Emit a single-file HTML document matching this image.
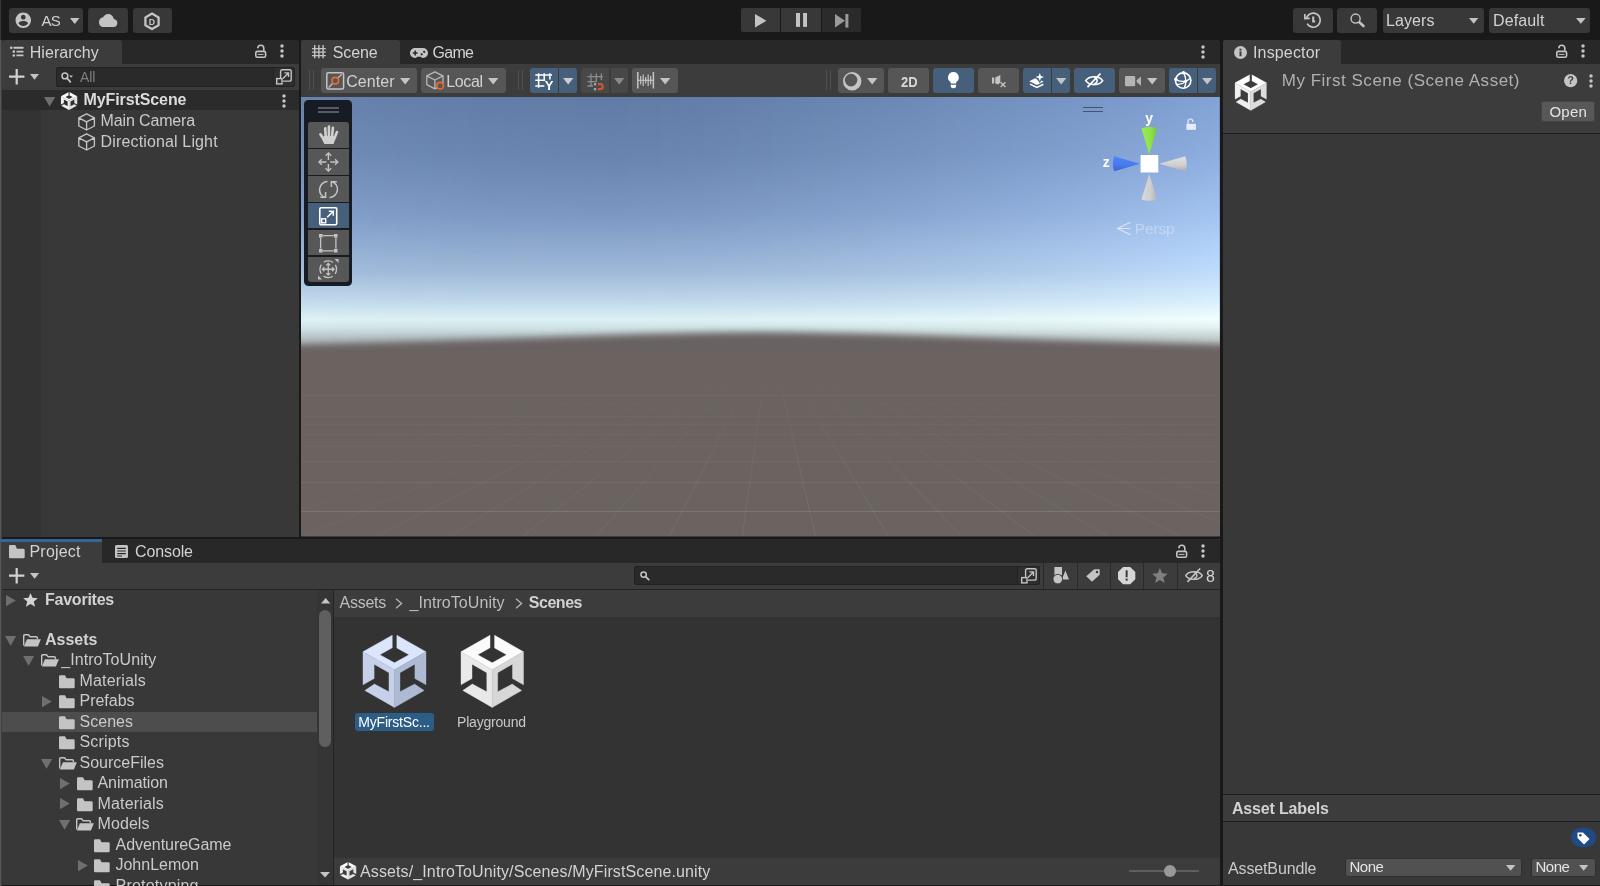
<!DOCTYPE html>
<html><head><meta charset="utf-8"><title>Unity Editor</title>
<style>
html,body{margin:0;padding:0;background:#191919;}
body{will-change:transform;width:1600px;height:886px;overflow:hidden;position:relative;font-family:"Liberation Sans",sans-serif;}
.a{position:absolute;display:block;}
.t{position:absolute;white-space:nowrap;}
svg{overflow:visible}
</style></head><body>
<div class="a " style="left:0px;top:0px;width:1600px;height:40px;background:#191919;"></div>
<div class="a " style="left:0px;top:0px;width:1.2px;height:40px;background:#363636;"></div>
<div class="a " style="left:0px;top:40px;width:1px;height:846px;background:#565656;"></div>
<div class="a " style="left:1px;top:40px;width:0.7px;height:846px;background:#404040;"></div>
<div class="a " style="left:9px;top:8.25px;width:74px;height:24.25px;background:#383838;border-radius:3px;"></div>
<div class="a " style="left:88px;top:8.25px;width:40px;height:24.25px;background:#383838;border-radius:3px;"></div>
<div class="a " style="left:133px;top:8.25px;width:38.5px;height:24.25px;background:#383838;border-radius:3px;"></div>
<div class="a " style="left:740.5px;top:8.25px;width:39.5px;height:23.75px;background:#383838;border-radius:2px 0 0 2px;"></div>
<div class="a " style="left:781px;top:8.25px;width:40px;height:23.75px;background:#383838;border-radius:0px;"></div>
<div class="a " style="left:822px;top:8.25px;width:38.75px;height:23.75px;background:#383838;border-radius:2px;"></div>
<div class="a " style="left:1293px;top:8.25px;width:39.5px;height:24.25px;background:#383838;border-radius:3px;"></div>
<div class="a " style="left:1337.3px;top:8.25px;width:39.90000000000009px;height:24.25px;background:#383838;border-radius:3px;"></div>
<div class="a " style="left:1382.5px;top:8.25px;width:101.25px;height:24.25px;background:#383838;border-radius:3px;"></div>
<div class="a " style="left:1488.75px;top:8.25px;width:101.25px;height:24.25px;background:#383838;border-radius:3px;"></div>
<div class="t" style="left:41.50px;top:13px;font-size:15px;line-height:15px;letter-spacing:-0.761px;color:#d2d2d2;">AS</div>
<div class="t" style="left:1386.00px;top:13px;font-size:16px;line-height:16px;letter-spacing:0.096px;color:#d2d2d2;">Layers</div>
<div class="t" style="left:1493.00px;top:13px;font-size:16px;line-height:16px;letter-spacing:0.135px;color:#d2d2d2;">Default</div>
<div class="a " style="left:1.5px;top:40px;width:297.5px;height:497px;background:#383838;border-radius:0 4px 0 0;"></div>
<div class="a " style="left:1.5px;top:40px;width:297.5px;height:24px;background:#282828;border-radius:0 3px 0 0;"></div>
<div class="a " style="left:1.5px;top:40px;width:120px;height:24px;background:#3c3c3c;border-radius:3px 3px 0 0;"></div>
<div class="a " style="left:1.5px;top:63.75px;width:297.5px;height:26.25px;background:#3c3c3c;"></div>
<div class="a " style="left:55.6px;top:67.25px;width:239.4px;height:19.25px;background:#2a2a2a;border-radius:3px;box-shadow:inset 0 0 0 1px #212121;"></div>
<div class="a " style="left:1.5px;top:90.2px;width:297.5px;height:19.8px;background:#2b2b2b;"></div>
<div class="a " style="left:1.5px;top:110px;width:39.5px;height:427px;background:#333333;"></div>
<div class="t" style="left:29.75px;top:45px;font-size:16px;line-height:16px;letter-spacing:0.068px;color:#d2d2d2;">Hierarchy</div>
<div class="t" style="left:80.00px;top:70px;font-size:14px;line-height:14px;letter-spacing:-0.155px;color:#7e7e7e;">All</div>
<div class="t" style="left:83.50px;top:92px;font-size:16px;line-height:16px;letter-spacing:-0.094px;color:#dcdcdc;font-weight:700;">MyFirstScene</div>
<div class="t" style="left:100.60px;top:113px;font-size:16px;line-height:16px;letter-spacing:-0.143px;color:#cacaca;">Main Camera</div>
<div class="t" style="left:100.60px;top:134px;font-size:16px;line-height:16px;letter-spacing:0.143px;color:#cacaca;">Directional Light</div>
<div class="a " style="left:301.25px;top:40px;width:918.75px;height:497px;background:#3c3c3c;border-radius:0 4px 0 0;"></div>
<div class="a " style="left:301.25px;top:40px;width:918.75px;height:24px;background:#282828;border-radius:0 4px 0 0;"></div>
<div class="a " style="left:301.25px;top:40px;width:98.75px;height:24px;background:#3c3c3c;border-radius:3px 3px 0 0;"></div>
<div class="t" style="left:332.75px;top:45px;font-size:16px;line-height:16px;letter-spacing:-0.091px;color:#d2d2d2;">Scene</div>
<div class="t" style="left:432.50px;top:45px;font-size:16px;line-height:16px;letter-spacing:-0.689px;color:#d2d2d2;">Game</div>
<div class="a " style="left:1222.5px;top:40px;width:377.5px;height:846px;background:#383838;"></div>
<div class="a " style="left:1222.5px;top:40px;width:377.5px;height:24px;background:#282828;"></div>
<div class="a " style="left:1222.5px;top:40px;width:118.75px;height:24px;background:#3c3c3c;border-radius:3px 3px 0 0;"></div>
<div class="a " style="left:1222.5px;top:63.75px;width:377.5px;height:69.25px;background:#3c3c3c;"></div>
<div class="a " style="left:1222.5px;top:133px;width:377.5px;height:1px;background:#1c1c1c;"></div>
<div class="t" style="left:1253.00px;top:45px;font-size:16px;line-height:16px;letter-spacing:0.149px;color:#d2d2d2;">Inspector</div>
<div class="t" style="left:1281.75px;top:72px;font-size:17px;line-height:17px;letter-spacing:0.513px;color:#b0b0b0;">My First Scene (Scene Asset)</div>
<div class="a " style="left:1541.25px;top:100.75px;width:53.75px;height:21.25px;background:#585858;border-radius:3px;box-shadow:inset 0 0 0 1px #444;"></div>
<div class="t" style="left:1549.50px;top:104px;font-size:15px;line-height:15px;letter-spacing:0.186px;color:#e4e4e4;">Open</div>
<div class="a " style="left:1222.5px;top:794px;width:377.5px;height:1px;background:#1c1c1c;"></div>
<div class="a " style="left:1222.5px;top:795px;width:377.5px;height:25.5px;background:#3c3c3c;"></div>
<div class="a " style="left:1222.5px;top:820.5px;width:377.5px;height:1px;background:#1c1c1c;"></div>
<div class="t" style="left:1231.90px;top:801px;font-size:16px;line-height:16px;letter-spacing:-0.155px;color:#d2d2d2;font-weight:700;">Asset Labels</div>
<div class="t" style="left:1228.00px;top:861px;font-size:16px;line-height:16px;letter-spacing:-0.133px;color:#cacaca;">AssetBundle</div>
<div class="a " style="left:1344.7px;top:857.5px;width:177.2px;height:19.5px;background:#515151;border-radius:3px;box-shadow:inset 0 0 0 1px #303030;"></div>
<div class="a " style="left:1530.6px;top:857.5px;width:65.4px;height:19.5px;background:#515151;border-radius:3px;box-shadow:inset 0 0 0 1px #303030;"></div>
<div class="t" style="left:1349.50px;top:859px;font-size:15px;line-height:15px;letter-spacing:-0.486px;color:#e4e4e4;">None</div>
<div class="t" style="left:1535.50px;top:859px;font-size:15px;line-height:15px;letter-spacing:-0.486px;color:#e4e4e4;">None</div>
<div class="a " style="left:1222.5px;top:885px;width:377.5px;height:1px;background:#191919;"></div>
<div class="a " style="left:1.5px;top:538.75px;width:1218.5px;height:346.25px;background:#383838;"></div>
<div class="a " style="left:1.5px;top:538.75px;width:1218.5px;height:24px;background:#282828;border-radius:0 4px 0 0;"></div>
<div class="a " style="left:1.5px;top:539.5px;width:100.5px;height:23.25px;background:#3c3c3c;border-radius:3px 3px 0 0;"></div>
<div class="a " style="left:0px;top:539px;width:102px;height:2.6px;background:#30669c;"></div>
<div class="a " style="left:1.5px;top:562.75px;width:1218.5px;height:26.5px;background:#3c3c3c;"></div>
<div class="a " style="left:1.5px;top:589.25px;width:1218.5px;height:1px;background:#232323;"></div>
<div class="t" style="left:29.50px;top:544px;font-size:16px;line-height:16px;letter-spacing:0.201px;color:#d2d2d2;">Project</div>
<div class="t" style="left:135.00px;top:544px;font-size:16px;line-height:16px;letter-spacing:-0.117px;color:#d2d2d2;">Console</div>
<div class="a " style="left:333.75px;top:590px;width:886.25px;height:295px;background:#333333;"></div>
<div class="a " style="left:332.75px;top:590px;width:1px;height:295px;background:#232323;"></div>
<div class="a " style="left:333.75px;top:590px;width:886.25px;height:26.75px;background:#3c3c3c;"></div>
<div class="a " style="left:333.75px;top:857.5px;width:886.25px;height:27.5px;background:#3c3c3c;"></div>
<div class="a " style="left:1.5px;top:885px;width:1218.5px;height:1px;background:#191919;"></div>
<div class="a " style="left:1.5px;top:712px;width:315px;height:20px;background:#4d4d4d;"></div>
<div class="a " style="left:317px;top:590px;width:15.75px;height:295px;background:#353535;"></div>
<div class="a " style="left:319.1px;top:610.3px;width:12.2px;height:136.9px;background:#5f5f5f;border-radius:6.100px;"></div>
<div class="t" style="left:45.00px;top:592px;font-size:16px;line-height:16px;letter-spacing:-0.236px;color:#d2d2d2;font-weight:700;">Favorites</div>
<div class="t" style="left:45.00px;top:632px;font-size:16px;line-height:16px;letter-spacing:0.006px;color:#d2d2d2;font-weight:700;">Assets</div>
<div class="t" style="left:61.25px;top:652px;font-size:16px;line-height:16px;letter-spacing:0.062px;color:#cacaca;">_IntroToUnity</div>
<div class="t" style="left:79.50px;top:673px;font-size:16px;line-height:16px;letter-spacing:0.168px;color:#cacaca;">Materials</div>
<div class="t" style="left:79.50px;top:693px;font-size:16px;line-height:16px;letter-spacing:-0.023px;color:#cacaca;">Prefabs</div>
<div class="t" style="left:79.50px;top:714px;font-size:16px;line-height:16px;letter-spacing:0.027px;color:#cacaca;">Scenes</div>
<div class="t" style="left:79.50px;top:734px;font-size:16px;line-height:16px;letter-spacing:0.184px;color:#cacaca;">Scripts</div>
<div class="t" style="left:79.50px;top:755px;font-size:16px;line-height:16px;letter-spacing:0.003px;color:#cacaca;">SourceFiles</div>
<div class="t" style="left:97.50px;top:775px;font-size:16px;line-height:16px;letter-spacing:-0.081px;color:#cacaca;">Animation</div>
<div class="t" style="left:97.50px;top:796px;font-size:16px;line-height:16px;letter-spacing:0.168px;color:#cacaca;">Materials</div>
<div class="t" style="left:97.50px;top:816px;font-size:16px;line-height:16px;letter-spacing:0.085px;color:#cacaca;">Models</div>
<div class="t" style="left:115.50px;top:837px;font-size:16px;line-height:16px;letter-spacing:-0.042px;color:#cacaca;">AdventureGame</div>
<div class="t" style="left:115.50px;top:857px;font-size:16px;line-height:16px;letter-spacing:-0.014px;color:#cacaca;">JohnLemon</div>
<div class="t" style="left:115.50px;top:878px;font-size:16px;line-height:16px;letter-spacing:0.207px;color:#cacaca;">Prototyping</div>
<div class="t" style="left:339.50px;top:595px;font-size:16px;line-height:16px;letter-spacing:-0.253px;color:#bdbdbd;">Assets</div>
<div class="t" style="left:409.50px;top:595px;font-size:16px;line-height:16px;letter-spacing:0.062px;color:#bdbdbd;">_IntroToUnity</div>
<div class="t" style="left:528.75px;top:595px;font-size:16px;line-height:16px;letter-spacing:-0.457px;color:#d2d2d2;font-weight:700;">Scenes</div>
<div class="a " style="left:354.5px;top:713.25px;width:79.75px;height:17.5px;background:#2c5d87;border-radius:3px;"></div>
<div class="t" style="left:358.25px;top:715px;font-size:14px;line-height:14px;letter-spacing:-0.194px;color:#ffffff;">MyFirstSc...</div>
<div class="t" style="left:457.00px;top:715px;font-size:14px;line-height:14px;letter-spacing:-0.203px;color:#c8c8c8;">Playground</div>
<div class="t" style="left:360.00px;top:864px;font-size:16px;line-height:16px;letter-spacing:0.118px;color:#d2d2d2;">Assets/_IntroToUnity/Scenes/MyFirstScene.unity</div>
<div class="a " style="left:634px;top:566px;width:405.75px;height:19.25px;background:#2a2a2a;border-radius:3px;box-shadow:inset 0 0 0 1px #212121;"></div>
<div class="a " style="left:1043.0px;top:563px;width:1px;height:26.25px;background:#2a2a2a;"></div>
<div class="a " style="left:1076.75px;top:563px;width:1px;height:26.25px;background:#2a2a2a;"></div>
<div class="a " style="left:1109.75px;top:563px;width:1px;height:26.25px;background:#2a2a2a;"></div>
<div class="a " style="left:1143.0px;top:563px;width:1px;height:26.25px;background:#2a2a2a;"></div>
<div class="a " style="left:1176.5px;top:563px;width:1px;height:26.25px;background:#2a2a2a;"></div>
<div class="t" style="left:1206.00px;top:569px;font-size:16px;line-height:16px;letter-spacing:0.000px;color:#d2d2d2;">8</div>
<svg class="a" style="left:301.25px;top:96.5px;overflow:hidden" width="918.75" height="439.75" viewBox="0 0 918.75 439.75"><defs>
<linearGradient id="skyL" x1="0" y1="0" x2="0" y2="1"><stop offset="0.0011" stop-color="#6581ab"/><stop offset="0.1330" stop-color="#6e8ab4"/><stop offset="0.2649" stop-color="#7f9bc6"/><stop offset="0.3991" stop-color="#a0bad9"/><stop offset="0.4650" stop-color="#c0d8ea"/><stop offset="0.5060" stop-color="#dcf1f4"/><stop offset="0.5242" stop-color="#d0e3e6"/><stop offset="0.5446" stop-color="#b8c6c9"/><stop offset="0.5719" stop-color="#a2adb0"/><stop offset="0.9994" stop-color="#a2adb0"/></linearGradient>
<linearGradient id="skyR" x1="0" y1="0" x2="0" y2="1"><stop offset="0.0011" stop-color="#83a3d6"/><stop offset="0.1330" stop-color="#8eaee0"/><stop offset="0.2649" stop-color="#a3c3f0"/><stop offset="0.3491" stop-color="#b4d3fa"/><stop offset="0.3991" stop-color="#bfdcfc"/><stop offset="0.4650" stop-color="#d8f0fd"/><stop offset="0.5060" stop-color="#f2fefe"/><stop offset="0.5242" stop-color="#e4f1f1"/><stop offset="0.5446" stop-color="#c8d3d4"/><stop offset="0.5719" stop-color="#b0babb"/><stop offset="0.9994" stop-color="#b0babb"/></linearGradient>
<linearGradient id="mk" x1="0" y1="0" x2="1" y2="0"><stop offset="0.0000" stop-color="#1a1a1a"/><stop offset="0.0208" stop-color="#161616"/><stop offset="0.0417" stop-color="#131313"/><stop offset="0.0625" stop-color="#0f0f0f"/><stop offset="0.0833" stop-color="#0d0d0d"/><stop offset="0.1042" stop-color="#0a0a0a"/><stop offset="0.1250" stop-color="#080808"/><stop offset="0.1458" stop-color="#060606"/><stop offset="0.1667" stop-color="#040404"/><stop offset="0.1875" stop-color="#030303"/><stop offset="0.2083" stop-color="#020202"/><stop offset="0.2292" stop-color="#010101"/><stop offset="0.2500" stop-color="#000000"/><stop offset="0.2708" stop-color="#000000"/><stop offset="0.2917" stop-color="#000000"/><stop offset="0.3125" stop-color="#010101"/><stop offset="0.3333" stop-color="#010101"/><stop offset="0.3542" stop-color="#030303"/><stop offset="0.3750" stop-color="#040404"/><stop offset="0.3958" stop-color="#070707"/><stop offset="0.4167" stop-color="#090909"/><stop offset="0.4375" stop-color="#0c0c0c"/><stop offset="0.4583" stop-color="#101010"/><stop offset="0.4792" stop-color="#141414"/><stop offset="0.5000" stop-color="#181818"/><stop offset="0.5208" stop-color="#1d1d1d"/><stop offset="0.5417" stop-color="#222222"/><stop offset="0.5625" stop-color="#272727"/><stop offset="0.5833" stop-color="#2d2d2d"/><stop offset="0.6042" stop-color="#343434"/><stop offset="0.6250" stop-color="#3b3b3b"/><stop offset="0.6458" stop-color="#424242"/><stop offset="0.6667" stop-color="#4a4a4a"/><stop offset="0.6875" stop-color="#525252"/><stop offset="0.7083" stop-color="#5a5a5a"/><stop offset="0.7292" stop-color="#636363"/><stop offset="0.7500" stop-color="#6d6d6d"/><stop offset="0.7708" stop-color="#777777"/><stop offset="0.7917" stop-color="#818181"/><stop offset="0.8125" stop-color="#8c8c8c"/><stop offset="0.8333" stop-color="#979797"/><stop offset="0.8542" stop-color="#a2a2a2"/><stop offset="0.8750" stop-color="#aeaeae"/><stop offset="0.8958" stop-color="#bbbbbb"/><stop offset="0.9167" stop-color="#c7c7c7"/><stop offset="0.9375" stop-color="#d5d5d5"/><stop offset="0.9583" stop-color="#e2e2e2"/><stop offset="0.9792" stop-color="#f1f1f1"/><stop offset="1.0000" stop-color="#ffffff"/></linearGradient>
<linearGradient id="dk" x1="0" y1="0" x2="1" y2="0"><stop offset="0.000" stop-color="#1a2a50" stop-opacity="0.0033"/><stop offset="0.025" stop-color="#1a2a50" stop-opacity="0.0049"/><stop offset="0.050" stop-color="#1a2a50" stop-opacity="0.0070"/><stop offset="0.075" stop-color="#1a2a50" stop-opacity="0.0098"/><stop offset="0.100" stop-color="#1a2a50" stop-opacity="0.0133"/><stop offset="0.125" stop-color="#1a2a50" stop-opacity="0.0175"/><stop offset="0.150" stop-color="#1a2a50" stop-opacity="0.0222"/><stop offset="0.175" stop-color="#1a2a50" stop-opacity="0.0274"/><stop offset="0.200" stop-color="#1a2a50" stop-opacity="0.0328"/><stop offset="0.225" stop-color="#1a2a50" stop-opacity="0.0380"/><stop offset="0.250" stop-color="#1a2a50" stop-opacity="0.0426"/><stop offset="0.275" stop-color="#1a2a50" stop-opacity="0.0464"/><stop offset="0.300" stop-color="#1a2a50" stop-opacity="0.0489"/><stop offset="0.325" stop-color="#1a2a50" stop-opacity="0.0500"/><stop offset="0.350" stop-color="#1a2a50" stop-opacity="0.0495"/><stop offset="0.375" stop-color="#1a2a50" stop-opacity="0.0475"/><stop offset="0.400" stop-color="#1a2a50" stop-opacity="0.0442"/><stop offset="0.425" stop-color="#1a2a50" stop-opacity="0.0399"/><stop offset="0.450" stop-color="#1a2a50" stop-opacity="0.0349"/><stop offset="0.475" stop-color="#1a2a50" stop-opacity="0.0296"/><stop offset="0.500" stop-color="#1a2a50" stop-opacity="0.0243"/><stop offset="0.525" stop-color="#1a2a50" stop-opacity="0.0193"/><stop offset="0.550" stop-color="#1a2a50" stop-opacity="0.0149"/><stop offset="0.575" stop-color="#1a2a50" stop-opacity="0.0111"/><stop offset="0.600" stop-color="#1a2a50" stop-opacity="0.0081"/><stop offset="0.625" stop-color="#1a2a50" stop-opacity="0.0057"/><stop offset="0.650" stop-color="#1a2a50" stop-opacity="0.0039"/><stop offset="0.675" stop-color="#1a2a50" stop-opacity="0.0026"/><stop offset="0.700" stop-color="#1a2a50" stop-opacity="0.0016"/><stop offset="0.725" stop-color="#1a2a50" stop-opacity="0.0010"/><stop offset="0.750" stop-color="#1a2a50" stop-opacity="0.0006"/><stop offset="0.775" stop-color="#1a2a50" stop-opacity="0.0004"/><stop offset="0.800" stop-color="#1a2a50" stop-opacity="0.0002"/><stop offset="0.825" stop-color="#1a2a50" stop-opacity="0.0001"/><stop offset="0.850" stop-color="#1a2a50" stop-opacity="0.0001"/><stop offset="0.875" stop-color="#1a2a50" stop-opacity="0.0000"/><stop offset="0.900" stop-color="#1a2a50" stop-opacity="0.0000"/><stop offset="0.925" stop-color="#1a2a50" stop-opacity="0.0000"/><stop offset="0.950" stop-color="#1a2a50" stop-opacity="0.0000"/><stop offset="0.975" stop-color="#1a2a50" stop-opacity="0.0000"/><stop offset="1.000" stop-color="#1a2a50" stop-opacity="0.0000"/></linearGradient>
<linearGradient id="mkv" x1="0" y1="0" x2="0" y2="1"><stop offset="0" stop-color="#fff"/><stop offset="0.18" stop-color="#fff"/><stop offset="0.4" stop-color="#000"/></linearGradient><mask id="mV" maskUnits="userSpaceOnUse" x="0" y="0" width="918.75" height="439.75"><rect x="0" y="0" width="918.75" height="439.75" fill="url(#mkv)"/></mask>
<mask id="mR" maskUnits="userSpaceOnUse" x="0" y="0" width="918.75" height="439.75"><rect x="0" y="0" width="918.75" height="439.75" fill="url(#mk)"/></mask>
<filter id="gb" x="-10%" y="-20%" width="120%" height="140%"><feGaussianBlur stdDeviation="3.800"/></filter>
<linearGradient id="gnd" x1="0" y1="0" x2="0" y2="1"><stop offset="0" stop-color="#696262"/><stop offset="0.25" stop-color="#6a6360"/><stop offset="1" stop-color="#6b645f"/></linearGradient>
</defs>
<rect x="0" y="0" width="918.75" height="439.75" fill="url(#skyL)"/>
<rect x="0" y="0" width="918.75" height="439.75" fill="url(#skyR)" mask="url(#mR)"/>
<rect x="0" y="0" width="918.75" height="439.75" fill="url(#dk)" mask="url(#mV)"/>
<path d="M-101.2 250.0 L-1.2 247.5 L113.8 244.5 L228.8 241.0 L343.8 237.3 L413.8 235.8 L458.8 235.3 L503.8 235.8 L573.8 237.3 L688.8 241.0 L803.8 244.5 L918.8 247.5 L1018.8 250.0 L1018.75 479.75 L-101.25 479.75 Z" fill="url(#gnd)" filter="url(#gb)"/>
<defs><linearGradient id="fade" gradientUnits="userSpaceOnUse" x1="0" y1="248.5" x2="0" y2="410.5"><stop offset="0" stop-color="#fff" stop-opacity="0"/><stop offset="1" stop-color="#fff" stop-opacity="0.075"/></linearGradient></defs><line x1="423.1" y1="252.5" x2="-291.8" y2="439.8" stroke="url(#fade)" stroke-width="1" opacity="0.15"/><line x1="427.5" y1="252.5" x2="-218.5" y2="439.8" stroke="url(#fade)" stroke-width="1" opacity="0.23"/><line x1="431.9" y1="252.5" x2="-145.2" y2="439.8" stroke="url(#fade)" stroke-width="1" opacity="0.31"/><line x1="436.3" y1="252.5" x2="-71.9" y2="439.8" stroke="url(#fade)" stroke-width="1" opacity="0.38"/><line x1="440.7" y1="252.5" x2="1.4" y2="439.8" stroke="url(#fade)" stroke-width="1" opacity="0.46"/><line x1="445.1" y1="252.5" x2="74.7" y2="439.8" stroke="url(#fade)" stroke-width="1" opacity="0.54"/><line x1="449.5" y1="252.5" x2="148.0" y2="439.8" stroke="url(#fade)" stroke-width="1" opacity="0.62"/><line x1="453.9" y1="252.5" x2="221.3" y2="439.8" stroke="url(#fade)" stroke-width="1" opacity="0.69"/><line x1="458.3" y1="252.5" x2="294.6" y2="439.8" stroke="url(#fade)" stroke-width="1" opacity="0.77"/><line x1="462.7" y1="252.5" x2="367.9" y2="439.8" stroke="url(#fade)" stroke-width="1" opacity="0.85"/><line x1="467.1" y1="252.5" x2="441.2" y2="439.8" stroke="url(#fade)" stroke-width="1" opacity="0.92"/><line x1="471.5" y1="252.5" x2="514.5" y2="439.8" stroke="url(#fade)" stroke-width="1" opacity="1.00"/><line x1="475.9" y1="252.5" x2="587.8" y2="439.8" stroke="url(#fade)" stroke-width="1" opacity="0.92"/><line x1="480.3" y1="252.5" x2="661.1" y2="439.8" stroke="url(#fade)" stroke-width="1" opacity="0.85"/><line x1="484.7" y1="252.5" x2="734.4" y2="439.8" stroke="url(#fade)" stroke-width="1" opacity="0.77"/><line x1="489.1" y1="252.5" x2="807.7" y2="439.8" stroke="url(#fade)" stroke-width="1" opacity="0.69"/><line x1="493.5" y1="252.5" x2="881.0" y2="439.8" stroke="url(#fade)" stroke-width="1" opacity="0.62"/><line x1="497.9" y1="252.5" x2="954.2" y2="439.8" stroke="url(#fade)" stroke-width="1" opacity="0.54"/><line x1="502.3" y1="252.5" x2="1027.6" y2="439.8" stroke="url(#fade)" stroke-width="1" opacity="0.46"/><line x1="506.7" y1="252.5" x2="1100.8" y2="439.8" stroke="url(#fade)" stroke-width="1" opacity="0.38"/><line x1="511.1" y1="252.5" x2="1174.2" y2="439.8" stroke="url(#fade)" stroke-width="1" opacity="0.31"/><line x1="515.5" y1="252.5" x2="1247.5" y2="439.8" stroke="url(#fade)" stroke-width="1" opacity="0.23"/><line x1="519.9" y1="252.5" x2="1320.8" y2="439.8" stroke="url(#fade)" stroke-width="1" opacity="0.15"/><line x1="0" y1="414.5" x2="918.75" y2="414.5" stroke="#fff" stroke-opacity="0.120" stroke-width="1"/><line x1="0" y1="385.5" x2="918.75" y2="385.5" stroke="#fff" stroke-opacity="0.062" stroke-width="1"/><line x1="0" y1="364.8" x2="918.75" y2="364.8" stroke="#fff" stroke-opacity="0.052" stroke-width="1"/><line x1="0" y1="349.2" x2="918.75" y2="349.2" stroke="#fff" stroke-opacity="0.044" stroke-width="1"/><line x1="0" y1="337.2" x2="918.75" y2="337.2" stroke="#fff" stroke-opacity="0.038" stroke-width="1"/><line x1="0" y1="327.5" x2="918.75" y2="327.5" stroke="#fff" stroke-opacity="0.033" stroke-width="1"/><line x1="0" y1="319.6" x2="918.75" y2="319.6" stroke="#fff" stroke-opacity="0.030" stroke-width="1"/><line x1="0" y1="313.0" x2="918.75" y2="313.0" stroke="#fff" stroke-opacity="0.026" stroke-width="1"/><line x1="0" y1="307.4" x2="918.75" y2="307.4" stroke="#fff" stroke-opacity="0.023" stroke-width="1"/><line x1="0" y1="302.6" x2="918.75" y2="302.6" stroke="#fff" stroke-opacity="0.021" stroke-width="1"/><line x1="0" y1="298.5" x2="918.75" y2="298.5" stroke="#fff" stroke-opacity="0.042" stroke-width="1"/><line x1="0" y1="294.9" x2="918.75" y2="294.9" stroke="#fff" stroke-opacity="0.017" stroke-width="1"/><line x1="0" y1="291.7" x2="918.75" y2="291.7" stroke="#fff" stroke-opacity="0.016" stroke-width="1"/><line x1="0" y1="288.8" x2="918.75" y2="288.8" stroke="#fff" stroke-opacity="0.014" stroke-width="1"/><line x1="0" y1="286.3" x2="918.75" y2="286.3" stroke="#fff" stroke-opacity="0.013" stroke-width="1"/><line x1="0" y1="284.0" x2="918.75" y2="284.0" stroke="#fff" stroke-opacity="0.012" stroke-width="1"/><line x1="0" y1="281.9" x2="918.75" y2="281.9" stroke="#fff" stroke-opacity="0.011" stroke-width="1"/><line x1="0" y1="280.0" x2="918.75" y2="280.0" stroke="#fff" stroke-opacity="0.010" stroke-width="1"/><line x1="0" y1="278.3" x2="918.75" y2="278.3" stroke="#fff" stroke-opacity="0.009" stroke-width="1"/><line x1="0" y1="276.8" x2="918.75" y2="276.8" stroke="#fff" stroke-opacity="0.008" stroke-width="1"/><line x1="0" y1="275.3" x2="918.75" y2="275.3" stroke="#fff" stroke-opacity="0.025" stroke-width="1"/><line x1="0" y1="274.0" x2="918.75" y2="274.0" stroke="#fff" stroke-opacity="0.007" stroke-width="1"/><line x1="0" y1="272.7" x2="918.75" y2="272.7" stroke="#fff" stroke-opacity="0.006" stroke-width="1"/><line x1="0" y1="271.6" x2="918.75" y2="271.6" stroke="#fff" stroke-opacity="0.006" stroke-width="1"/><line x1="0" y1="270.5" x2="918.75" y2="270.5" stroke="#fff" stroke-opacity="0.005" stroke-width="1"/><line x1="0" y1="269.5" x2="918.75" y2="269.5" stroke="#fff" stroke-opacity="0.004" stroke-width="1"/><line x1="0" y1="268.6" x2="918.75" y2="268.6" stroke="#fff" stroke-opacity="0.004" stroke-width="1"/><line x1="0" y1="267.7" x2="918.75" y2="267.7" stroke="#fff" stroke-opacity="0.004" stroke-width="1"/><line x1="0" y1="266.9" x2="918.75" y2="266.9" stroke="#fff" stroke-opacity="0.003" stroke-width="1"/><line x1="0" y1="266.1" x2="918.75" y2="266.1" stroke="#fff" stroke-opacity="0.003" stroke-width="1"/><line x1="0" y1="265.4" x2="918.75" y2="265.4" stroke="#fff" stroke-opacity="0.018" stroke-width="1"/><line x1="0" y1="264.7" x2="918.75" y2="264.7" stroke="#fff" stroke-opacity="0.002" stroke-width="1"/><line x1="0" y1="264.0" x2="918.75" y2="264.0" stroke="#fff" stroke-opacity="0.002" stroke-width="1"/><line x1="0" y1="263.4" x2="918.75" y2="263.4" stroke="#fff" stroke-opacity="0.001" stroke-width="1"/><line x1="0" y1="262.8" x2="918.75" y2="262.8" stroke="#fff" stroke-opacity="0.001" stroke-width="1"/><line x1="0" y1="262.2" x2="918.75" y2="262.2" stroke="#fff" stroke-opacity="0.001" stroke-width="1"/><line x1="0" y1="261.7" x2="918.75" y2="261.7" stroke="#fff" stroke-opacity="0.001" stroke-width="1"/><line x1="0" y1="261.2" x2="918.75" y2="261.2" stroke="#fff" stroke-opacity="0.000" stroke-width="1"/><line x1="0" y1="260.7" x2="918.75" y2="260.7" stroke="#fff" stroke-opacity="0.000" stroke-width="1"/><line x1="0" y1="260.3" x2="918.75" y2="260.3" stroke="#fff" stroke-opacity="0.000" stroke-width="1"/><line x1="0" y1="259.8" x2="918.75" y2="259.8" stroke="#fff" stroke-opacity="0.015" stroke-width="1"/><line x1="0" y1="259.4" x2="918.75" y2="259.4" stroke="#fff" stroke-opacity="0.000" stroke-width="1"/><line x1="0" y1="259.0" x2="918.75" y2="259.0" stroke="#fff" stroke-opacity="0.000" stroke-width="1"/><line x1="0" y1="258.6" x2="918.75" y2="258.6" stroke="#fff" stroke-opacity="0.000" stroke-width="1"/><line x1="0" y1="258.3" x2="918.75" y2="258.3" stroke="#fff" stroke-opacity="0.000" stroke-width="1"/><line x1="0" y1="257.9" x2="918.75" y2="257.9" stroke="#fff" stroke-opacity="0.000" stroke-width="1"/><line x1="0" y1="257.6" x2="918.75" y2="257.6" stroke="#fff" stroke-opacity="0.000" stroke-width="1"/><line x1="0" y1="257.2" x2="918.75" y2="257.2" stroke="#fff" stroke-opacity="0.000" stroke-width="1"/><line x1="0" y1="256.9" x2="918.75" y2="256.9" stroke="#fff" stroke-opacity="0.000" stroke-width="1"/><line x1="0" y1="256.6" x2="918.75" y2="256.6" stroke="#fff" stroke-opacity="0.000" stroke-width="1"/><line x1="0" y1="256.3" x2="918.75" y2="256.3" stroke="#fff" stroke-opacity="0.015" stroke-width="1"/><line x1="0" y1="256.0" x2="918.75" y2="256.0" stroke="#fff" stroke-opacity="0.000" stroke-width="1"/><line x1="0" y1="255.8" x2="918.75" y2="255.8" stroke="#fff" stroke-opacity="0.000" stroke-width="1"/><line x1="0" y1="255.5" x2="918.75" y2="255.5" stroke="#fff" stroke-opacity="0.000" stroke-width="1"/><line x1="0" y1="255.2" x2="918.75" y2="255.2" stroke="#fff" stroke-opacity="0.000" stroke-width="1"/></svg>
<svg class="a" style="left:14.15px;top:11.45px;" width="18.6" height="18.6" viewBox="0 0 24 24"><path fill="#c4c4c4" d="M12 2C6.48 2 2 6.48 2 12s4.48 10 10 10 10-4.48 10-10S17.52 2 12 2zm0 3c1.66 0 3 1.34 3 3s-1.34 3-3 3-3-1.34-3-3 1.34-3 3-3zm0 14.2c-2.5 0-4.71-1.28-6-3.22.03-1.99 4-3.08 6-3.08 1.99 0 5.970 1.09 6 3.08-1.29 1.94-3.5 3.22-6 3.22z"/></svg>
<svg class="a" style="left:69.5px;top:17.95px;" width="9.5" height="5.9" viewBox="0 0 9.5 5.9"><path d="M0 0H9.5L4.75 5.9Z" fill="#c4c4c4"/></svg>
<svg class="a" style="left:98.9px;top:13.8px;" preserveAspectRatio="none" width="18.4" height="13.1" viewBox="0 4 24 16"><path fill="#c4c4c4" d="M19.35 10.04C18.67 6.59 15.64 4 12 4 9.11 4 6.6 5.64 5.35 8.040 2.34 8.36 0 10.91 0 14c0 3.31 2.69 6 6 6h13c2.76 0 5-2.240 5-5 0-2.64-2.050-4.78-4.65-4.96z"/></svg>
<svg class="a" style="left:143.4px;top:12px;" width="18" height="19" viewBox="0 0 18 19"><path d="M9 1.6L15.6 5.4V13.2L9 17L2.4 13.2V5.4Z" fill="none" stroke="#c4c4c4" stroke-width="2.3" stroke-linejoin="round"/><text x="9" y="12.500" font-size="8.800" font-weight="700" text-anchor="middle" fill="#c4c4c4" font-family="Liberation Sans,sans-serif">D</text></svg>
<div class="a " style="left:822px;top:8.25px;width:38.75px;height:23.75px;background:#2b2b2b;border-radius:0 2px 2px 0;"></div>
<svg class="a" style="left:754.9px;top:13.5px;" width="11.4" height="13.6" viewBox="0 0 11.4 13.6"><path d="M0 0L11.4 6.8L0 13.6Z" fill="#c4c4c4"/></svg>
<svg class="a" style="left:796px;top:13.1px;" width="11" height="13.9" viewBox="0 0 11 13.9"><rect x="0" y="0" width="4" height="13.9" fill="#c4c4c4"/><rect x="7.1" y="0" width="3.9" height="13.9" fill="#c4c4c4"/></svg>
<svg class="a" style="left:834.8px;top:13.5px;" width="13.5" height="13.6" viewBox="0 0 13.5 13.6"><path d="M0 0L10 6.8L0 13.6Z" fill="#9a9a9a"/><rect x="10.4" y="0" width="3" height="13.6" fill="#9a9a9a"/></svg>
<svg class="a" style="left:1304px;top:12px;" width="17.5" height="16.8" viewBox="0 0 17.5 16.8"><path d="M2.380 6.630A7 7 0 1 1 3.140 11.700" fill="none" stroke="#c4c4c4" stroke-width="1.600"/><path d="M0.800 2.100L0.900 6.600L5.800 6.300" fill="none" stroke="#c4c4c4" stroke-width="1.700"/><path d="M9.200 4.400V9.500H11.200" fill="none" stroke="#c4c4c4" stroke-width="2.100"/></svg>
<svg class="a" style="left:1349.5px;top:13px;" width="15.5" height="14.5" viewBox="0 0 15.5 14.5"><circle cx="5.600" cy="5.600" r="4.550" fill="none" stroke="#c4c4c4" stroke-width="1.400"/><path d="M9.600 9.600L13.500 13" stroke="#c4c4c4" stroke-width="2.600" stroke-linecap="round"/></svg>
<svg class="a" style="left:1469.4499999999998px;top:18.0px;" width="9.3" height="5.8" viewBox="0 0 9.3 5.8"><path d="M0 0H9.3L4.65 5.8Z" fill="#c4c4c4"/></svg>
<svg class="a" style="left:1575.75px;top:18.0px;" width="9.7" height="5.8" viewBox="0 0 9.7 5.8"><path d="M0 0H9.7L4.85 5.8Z" fill="#c4c4c4"/></svg>
<svg class="a" style="left:9.5px;top:46.3px;" width="14" height="11.5" viewBox="0 0 14 11.5"><circle cx="1.200" cy="1.750" r="1.300" fill="#c4c4c4"/><rect x="3.400" y="0.800" width="10.100" height="1.900" rx="0.500" fill="#c4c4c4"/><circle cx="3.800" cy="5.650" r="1.300" fill="#c4c4c4"/><rect x="6.400" y="4.850" width="7.100" height="1.750" rx="0.500" fill="#c4c4c4"/><circle cx="3.800" cy="9.450" r="1.300" fill="#c4c4c4"/><rect x="6.400" y="8.600" width="7.100" height="1.750" rx="0.500" fill="#c4c4c4"/></svg>
<svg class="a" style="left:254.8px;top:44px;" width="11.4" height="14.1" viewBox="0 0 11.4 14.1"><path d="M2.800 4.200A3 3 0 0 1 8.800 4.200V6.800" fill="none" stroke="#c4c4c4" stroke-width="1.600"/><rect x="0.800" y="7.400" width="9.800" height="5.900" rx="1.500" fill="none" stroke="#c4c4c4" stroke-width="1.600"/><rect x="2.700" y="9.900" width="5.800" height="1" fill="#c4c4c4"/></svg>
<svg class="a" style="left:280.2px;top:43.1px;" width="4" height="16" viewBox="0 0 4 16"><circle cx="2" cy="3" r="1.75" fill="#c4c4c4"/><circle cx="2" cy="8" r="1.75" fill="#c4c4c4"/><circle cx="2" cy="13" r="1.75" fill="#c4c4c4"/></svg>
<svg class="a" style="left:8.7px;top:69.2px;" width="15.4" height="15.4" viewBox="0 0 15.4 15.4"><path d="M7.7 0V15.4M0 7.7H15.4" stroke="#d2d2d2" stroke-width="2.2"/></svg>
<svg class="a" style="left:30.0px;top:74.025px;" width="9" height="5.75" viewBox="0 0 9 5.75"><path d="M0 0H9L4.5 5.75Z" fill="#c4c4c4"/></svg>
<svg class="a" style="left:61px;top:71.5px;" width="12" height="11" viewBox="0 0 12 11"><circle cx="3.900" cy="3.900" r="2.900" fill="none" stroke="#c4c4c4" stroke-width="1.500"/><path d="M6 6L9.300 9.800" stroke="#c4c4c4" stroke-width="1.800" stroke-linecap="round"/><path d="M8.200 3.600H12L10.100 5.800Z" fill="#c4c4c4"/></svg>
<div class="a " style="left:272.5px;top:67.25px;width:22.5px;height:19.25px;background:#2f2f2f;border-radius:0 4px 4px 0;box-shadow:inset 0 0 0 1px #232323;"></div>
<svg class="a" style="left:276px;top:68.8px;" width="16" height="16" viewBox="0 0 16 16"><path d="M4.600 9V2.200a1.500 1.500 0 0 1 1.500-1.500h7.600a1.500 1.500 0 0 1 1.500 1.500v8.400a1.500 1.500 0 0 1-1.500 1.500H7" fill="none" stroke="#c4c4c4" stroke-width="1.400"/><path d="M7 9.400L12.200 4.200M8.400 3.900H12.500V8" fill="none" stroke="#c4c4c4" stroke-width="1.400"/><rect x="0.700" y="9.600" width="5.300" height="5.300" fill="none" stroke="#c4c4c4" stroke-width="1.400"/></svg>
<svg class="a" style="left:43.775px;top:96.9px;" width="11.25" height="9.6" viewBox="0 0 11.25 9.6"><path d="M0 0H11.25L5.625 9.6Z" fill="#6f6f6f"/></svg>
<svg class="a" style="left:61px;top:92px;" preserveAspectRatio="none" width="16.2" height="18" viewBox="128 80 618 725"><path fill="#ffffff" stroke="#ffffff" stroke-width="4" d="M415 92.500L128 255L437 432L745 255L460 93V218L580 285L437 365L293 285L415 217Z"/><path fill="#f0f0f0" stroke="#f0f0f0" stroke-width="4" d="M128 255L437 432V805L146 638L240 575L383 650V462L237 378V520L128 582Z"/><path fill="#e2e2e2" stroke="#e2e2e2" stroke-width="4" d="M746 255L437 432V805L728 638L634 575L491 650V462L637 378V520L746 582Z"/></svg>
<svg class="a" style="left:281.5px;top:93.1px;" width="4" height="16" viewBox="0 0 4 16"><circle cx="2" cy="3" r="1.75" fill="#c4c4c4"/><circle cx="2" cy="8" r="1.75" fill="#c4c4c4"/><circle cx="2" cy="13" r="1.75" fill="#c4c4c4"/></svg>
<svg class="a" style="left:77.75px;top:113px;" width="17.25" height="17.7" viewBox="0 0 17.25 17.7"><path d="M8.6 0.8L16.4 4.8V13L8.6 17L0.8 13V4.8Z M0.8 4.8L8.6 8.8L16.4 4.8 M8.6 8.8V17" fill="none" stroke="#c4c4c4" stroke-width="1.35" stroke-linejoin="round"/></svg>
<svg class="a" style="left:77.75px;top:132.8px;" width="17.25" height="17.7" viewBox="0 0 17.25 17.7"><path d="M8.6 0.8L16.4 4.8V13L8.6 17L0.8 13V4.8Z M0.8 4.8L8.6 8.8L16.4 4.8 M8.6 8.8V17" fill="none" stroke="#c4c4c4" stroke-width="1.35" stroke-linejoin="round"/></svg>
<svg class="a" style="left:311.9px;top:45.4px;" width="13.8" height="13.2" viewBox="0 0 13.8 13.2"><path d="M2.700 0V13.200M6.900 0V13.200M11.100 0V13.200M0 3.600H13.800M0 7.100H13.800M0 10.600H13.800" stroke="#c4c4c4" stroke-width="1.400"/></svg>
<svg class="a" style="left:410px;top:48px;" width="18" height="10" viewBox="0 0 18 10"><path d="M5 0H13A5 5 0 0 1 13 10Q11.600 10 10.900 8.800H7.100Q6.400 10 5 10A5 5 0 0 1 5 0Z" fill="#c4c4c4"/><path d="M5.200 2.600V7.400M2.800 5H7.600" stroke="#282828" stroke-width="1.500"/><circle cx="11.700" cy="6.300" r="1.150" fill="#282828"/><circle cx="14.200" cy="3.800" r="1.150" fill="#282828"/></svg>
<svg class="a" style="left:1201px;top:43.6px;" width="4" height="16" viewBox="0 0 4 16"><circle cx="2" cy="3" r="1.75" fill="#c4c4c4"/><circle cx="2" cy="8" r="1.75" fill="#c4c4c4"/><circle cx="2" cy="13" r="1.75" fill="#c4c4c4"/></svg>
<div class="a " style="left:308.7px;top:70.3px;width:1.2px;height:20.2px;background:#505050;"></div>
<div class="a " style="left:312.7px;top:70.3px;width:1.2px;height:20.2px;background:#505050;"></div>
<div class="a " style="left:517.8px;top:70.3px;width:1.2px;height:20.2px;background:#505050;"></div>
<div class="a " style="left:521.8px;top:70.3px;width:1.2px;height:20.2px;background:#505050;"></div>
<div class="a " style="left:825.9px;top:70.3px;width:1.2px;height:20.2px;background:#505050;"></div>
<div class="a " style="left:829.9px;top:70.3px;width:1.2px;height:20.2px;background:#505050;"></div>
<div class="a " style="left:321.25px;top:68.1px;width:95.75px;height:25px;background:#565656;border-radius:3px;"></div>
<div class="a " style="left:421px;top:68.1px;width:85px;height:25px;background:#565656;border-radius:3px;"></div>
<div class="a " style="left:530px;top:68.1px;width:27.799999999999955px;height:25px;background:#46607c;border-radius:3px 0 0 3px;"></div>
<div class="a " style="left:559.2px;top:68.1px;width:18.09999999999991px;height:25px;background:#46607c;border-radius:0 3px 3px 0;"></div>
<div class="a " style="left:581.4px;top:68.1px;width:27.800000000000068px;height:25px;background:#484848;border-radius:3px 0 0 3px;"></div>
<div class="a " style="left:610.6px;top:68.1px;width:17.799999999999955px;height:25px;background:#484848;border-radius:0 3px 3px 0;"></div>
<div class="a " style="left:632.2px;top:68.1px;width:45.89999999999998px;height:25px;background:#565656;border-radius:3px;"></div>
<div class="a " style="left:838.4px;top:68.1px;width:45.60000000000002px;height:25px;background:#565656;border-radius:3px;"></div>
<div class="a " style="left:888.2px;top:68.1px;width:40.799999999999955px;height:25px;background:#565656;border-radius:3px;"></div>
<div class="a " style="left:933px;top:68.1px;width:40.799999999999955px;height:25px;background:#46607c;border-radius:3px;"></div>
<div class="a " style="left:978px;top:68.1px;width:40.60000000000002px;height:25px;background:#565656;border-radius:3px;"></div>
<div class="a " style="left:1022.9px;top:68.1px;width:27.800000000000068px;height:25px;background:#46607c;border-radius:3px 0 0 3px;"></div>
<div class="a " style="left:1052.2px;top:68.1px;width:17.899999999999864px;height:25px;background:#46607c;border-radius:0 3px 3px 0;"></div>
<div class="a " style="left:1074px;top:68.1px;width:40.700000000000045px;height:25px;background:#46607c;border-radius:3px;"></div>
<div class="a " style="left:1119px;top:68.1px;width:45.700000000000045px;height:25px;background:#565656;border-radius:3px;"></div>
<div class="a " style="left:1168.8px;top:68.1px;width:28.0px;height:25px;background:#46607c;border-radius:3px 0 0 3px;"></div>
<div class="a " style="left:1198.2px;top:68.1px;width:17.700000000000045px;height:25px;background:#46607c;border-radius:0 3px 3px 0;"></div>
<div class="t" style="left:346.25px;top:74px;font-size:16px;line-height:16px;letter-spacing:0.036px;color:#d2d2d2;">Center</div>
<div class="t" style="left:446.25px;top:74px;font-size:16px;line-height:16px;letter-spacing:-0.387px;color:#d2d2d2;">Local</div>
<div class="t" style="left:900.70px;top:75px;font-size:14px;line-height:14px;letter-spacing:0.000px;color:#d8d8d8;font-weight:700;transform:scaleX(0.9276);transform-origin:0 0;">2D</div>
<svg class="a" style="left:399.55px;top:77.7px;" width="10.4" height="6.4" viewBox="0 0 10.4 6.4"><path d="M0 0H10.4L5.2 6.4Z" fill="#c4c4c4"/></svg>
<svg class="a" style="left:488.2px;top:77.7px;" width="10.4" height="6.4" viewBox="0 0 10.4 6.4"><path d="M0 0H10.4L5.2 6.4Z" fill="#c4c4c4"/></svg>
<svg class="a" style="left:563.0999999999999px;top:77.7px;" width="10.4" height="6.4" viewBox="0 0 10.4 6.4"><path d="M0 0H10.4L5.2 6.4Z" fill="#cdcdcd"/></svg>
<svg class="a" style="left:614.3px;top:77.7px;" width="10.4" height="6.4" viewBox="0 0 10.4 6.4"><path d="M0 0H10.4L5.2 6.4Z" fill="#8a8a8a"/></svg>
<svg class="a" style="left:660.4px;top:77.7px;" width="10.4" height="6.4" viewBox="0 0 10.4 6.4"><path d="M0 0H10.4L5.2 6.4Z" fill="#c4c4c4"/></svg>
<svg class="a" style="left:866.5999999999999px;top:77.7px;" width="10.4" height="6.4" viewBox="0 0 10.4 6.4"><path d="M0 0H10.4L5.2 6.4Z" fill="#c4c4c4"/></svg>
<svg class="a" style="left:1056.0px;top:77.7px;" width="10.4" height="6.4" viewBox="0 0 10.4 6.4"><path d="M0 0H10.4L5.2 6.4Z" fill="#c4c4c4"/></svg>
<svg class="a" style="left:1147.0px;top:77.7px;" width="10.4" height="6.4" viewBox="0 0 10.4 6.4"><path d="M0 0H10.4L5.2 6.4Z" fill="#c4c4c4"/></svg>
<svg class="a" style="left:1202.0px;top:77.7px;" width="10.4" height="6.4" viewBox="0 0 10.4 6.4"><path d="M0 0H10.4L5.2 6.4Z" fill="#c4c4c4"/></svg>
<svg class="a" style="left:326px;top:71.9px;" width="18.4" height="17.9" viewBox="0 0 18.4 17.9"><rect x="0.800" y="0.800" width="16.800" height="16.300" rx="1.500" fill="none" stroke="#c4c4c4" stroke-width="1.500"/><path d="M2.600 15.600L6.800 11.300M11.600 6.300L15.800 2.200" stroke="#bcbcbc" stroke-width="1.400"/><circle cx="9.250" cy="8.700" r="3.300" fill="none" stroke="#e76b36" stroke-width="1.600"/></svg>
<svg class="a" style="left:425.6px;top:71.2px;" width="19.5" height="19.5" viewBox="0 0 19.5 19.5"><path d="M8.900 0.800L17 4.900V13.600L8.900 17.800L0.800 13.600V4.900Z M0.800 4.900L8.900 9L17 4.900 M8.900 9V17.800" fill="none" stroke="#b8b8b8" stroke-width="1.300" stroke-linejoin="round"/><circle cx="14.100" cy="14.700" r="3.300" fill="#565656" stroke="#e76b36" stroke-width="1.600"/></svg>
<svg class="a" style="left:535px;top:72.5px;" width="17.5" height="17.5" viewBox="0 0 17.5 17.5"><path d="M3.600 0.300V14.800M9.200 0.300V8M14.900 0.300V6.400M0.300 2.100H17M0.300 7.300H10.200M0.300 12.900H9.400" stroke="#ffffff" stroke-width="1.500"/><text x="14.100" y="17.100" font-size="13" font-weight="700" text-anchor="middle" fill="#ffffff" font-family="Liberation Sans,sans-serif">Y</text></svg>
<svg class="a" style="left:586.7px;top:72.5px;" width="18" height="17.5" viewBox="0 0 18 17.5"><path d="M4 0.500V13.500M9.300 0.500V9M14.300 0.500V7M0.500 3.700H16M0.500 8.600H9.500M0.500 13H6" stroke="#8c8c8c" stroke-width="1.300"/><rect x="6.800" y="10" width="2.400" height="2.400" fill="#a0a0a0"/><rect x="6.800" y="15" width="2.400" height="2.400" fill="#a0a0a0"/><path d="M10.800 11.200H13.200A2.500 2.500 0 0 1 13.200 16.200H10.800" fill="none" stroke="#c8592f" stroke-width="2.200"/></svg>
<svg class="a" style="left:637.2px;top:72px;" width="17.2" height="16.6" viewBox="0 0 17.2 16.6"><path d="M0.800 0V16.600M16.400 0V16.600" stroke="#c4c4c4" stroke-width="1.500"/><path d="M3.700 4V12.600M6.200 2.500V14M8.700 5V11.600M11.200 2.500V14M13.700 4V12.600" stroke="#c4c4c4" stroke-width="1.200"/><path d="M1 8.300H16.200" stroke="#c4c4c4" stroke-width="1.200"/></svg>
<svg class="a" style="left:843.3px;top:71.6px;" width="18.4" height="18.4" viewBox="0 0 18.4 18.4"><path fill-rule="evenodd" fill="#c4c4c4" d="M9.200 0A9.200 9.200 0 1 1 9.200 18.400A9.200 9.200 0 1 1 9.200 0ZM8.100 1.800A6.300 6.300 0 1 0 8.100 14.400A6.300 6.300 0 1 0 8.100 1.800Z"/></svg>
<svg class="a" style="left:948px;top:71.8px;" width="10.8" height="16.3" viewBox="0 0 10.8 16.3"><path d="M5.400 0A5.400 5.400 0 0 1 8.300 9.950L8.100 11.600H2.700L2.500 9.950A5.400 5.400 0 0 1 5.400 0Z" fill="#ffffff"/><path d="M2.700 12.700H8.100V13.900A2.400 2.400 0 0 1 5.700 16.300H5.100A2.400 2.400 0 0 1 2.700 13.900Z" fill="#ffffff"/></svg>
<svg class="a" style="left:992px;top:74.5px;" width="14" height="12.4" viewBox="0 0 14 12.4"><rect x="0" y="2.500" width="2.200" height="6" fill="#c4c4c4"/><path d="M3.300 2.500L8.300 0V7.300L6.300 9.600L3.300 8.500Z" fill="#c4c4c4"/><path d="M8.600 7.200L13.400 12M13.400 7.200L8.600 12" stroke="#c4c4c4" stroke-width="1.300"/></svg>
<svg class="a" style="left:1029.2px;top:72.8px;" width="16" height="15.4" viewBox="0 0 16 15.4"><path d="M10.800 0L11.900 3L15 4.100L11.900 5.200L10.800 8.200L9.700 5.200L6.600 4.100L9.700 3Z" fill="#ffffff"/><path d="M6.200 5.200L0.300 8.300L7.900 11.900L14.600 8.600L12.400 7.400L10.800 10L7.900 6.200Z" fill="#ffffff"/><path d="M1 11.200L7.900 14.500L14.400 11.300" fill="none" stroke="#ffffff" stroke-width="1.500"/></svg>
<svg class="a" style="left:1085.2px;top:72.5px;" width="18.4" height="14.7" viewBox="0 0 18.400 14.700"><path d="M0.700 7.700C4 2.500 14.400 2.500 17.700 7.700C14.400 12.900 4 12.900 0.700 7.700Z" fill="none" stroke="#ffffff" stroke-width="1.6"/><path d="M9.200 4.700A3 3 0 1 1 9.100 10.700" fill="none" stroke="#ffffff" stroke-width="1.6"/><path d="M2.500 14.200L15.500 0.500" stroke="#ffffff" stroke-width="1.8"/></svg>
<svg class="a" style="left:1125px;top:75.8px;" width="16" height="10.3" viewBox="0 0 16 10.3"><rect x="0" y="0" width="10.200" height="10.300" rx="1.200" fill="#b4b4b4"/><path d="M11.600 4.200L16 0.600V9.700L11.600 6.100Z" fill="#b4b4b4"/></svg>
<svg class="a" style="left:1173.8px;top:71.4px;" width="18.4" height="18.4" viewBox="0 0 18.4 18.4"><circle cx="9.200" cy="9.600" r="7.700" fill="none" stroke="#ffffff" stroke-width="1.600"/><path d="M9.500 1.800C12.500 6 12.500 12.500 10.200 17.200M1.700 8.200C6 11.500 12.500 11 16.600 7.200M2.700 13.200C6.500 14 9.500 12.500 11.500 10.400" fill="none" stroke="#ffffff" stroke-width="1.300"/><circle cx="9.500" cy="1.800" r="1.700" fill="#ffffff"/><circle cx="1.800" cy="8.200" r="1.700" fill="#ffffff"/><circle cx="11.600" cy="10.300" r="1.500" fill="#ffffff"/></svg>
<div class="a " style="left:304px;top:100px;width:48.2px;height:185.6px;background:#171c24;border-radius:4.500px;"></div>
<div class="a " style="left:318px;top:107.4px;width:20.8px;height:1.2px;background:#565c63;"></div>
<div class="a " style="left:318px;top:111.4px;width:20.8px;height:1.2px;background:#565c63;"></div>
<div class="a " style="left:307.8px;top:122px;width:41px;height:25.599999999999994px;background:#575757;border-radius:3px 3px 0 0;"></div>
<div class="a " style="left:307.8px;top:149.1px;width:41px;height:25.5px;background:#575757;border-radius:0;"></div>
<div class="a " style="left:307.8px;top:176.1px;width:41px;height:25.5px;background:#575757;border-radius:0;"></div>
<div class="a " style="left:307.8px;top:202.8px;width:41px;height:25.399999999999977px;background:#46607c;border-radius:0;"></div>
<div class="a " style="left:307.8px;top:229.5px;width:41px;height:25.69999999999999px;background:#575757;border-radius:0;"></div>
<div class="a " style="left:307.8px;top:256.6px;width:41px;height:25.19999999999999px;background:#575757;border-radius:0 0 3px 3px;"></div>
<svg class="a" style="left:318.6px;top:124.8px;" width="19.3" height="19" viewBox="0 0 19.3 19"><path d="M5.400 19H14.600Q16.400 15 16.400 11H5.200L3 13.500Q3.500 16.500 5.400 19Z" fill="#d0d0d0"/><path d="M6.800 12.500L6.200 3.300M9.900 12.500V1.500M13 12.500L13.900 2.700M15.200 14L18 7M5.200 15L1.400 9.300" stroke="#d0d0d0" stroke-width="2.600" stroke-linecap="round"/></svg>
<svg class="a" style="left:318px;top:152px;" width="20.8" height="20" viewBox="0 0 20.8 20"><path d="M10.400 1V8M10.400 12V19M1 10H8.400M12.400 10H19.800" stroke="#c4c4c4" stroke-width="1.400"/><path d="M7.600 3.800L10.400 1L13.200 3.800M7.600 16.200L10.400 19L13.200 16.200M3.800 7.200L1 10L3.800 12.800M17 7.200L19.800 10L17 12.800" fill="none" stroke="#c4c4c4" stroke-width="1.400"/></svg>
<svg class="a" style="left:319px;top:179.5px;" width="19" height="19" viewBox="0 0 19 19"><path d="M6.200 17.500A8.200 8.200 0 0 1 8.500 1.500" fill="none" stroke="#c4c4c4" stroke-width="1.500"/><path d="M12.800 1.500A8.200 8.200 0 0 1 10.500 17.500" fill="none" stroke="#c4c4c4" stroke-width="1.500"/><path d="M1.300 17.200H6.600V12" fill="none" stroke="#c4c4c4" stroke-width="1.500"/><path d="M17.800 1.800H12.400V7" fill="none" stroke="#c4c4c4" stroke-width="1.500"/></svg>
<svg class="a" style="left:319px;top:206.5px;" width="18.5" height="18.5" viewBox="0 0 18.5 18.5"><rect x="0.800" y="0.800" width="16.900" height="16.900" rx="1.200" fill="none" stroke="#ffffff" stroke-width="1.600"/><rect x="2.700" y="11.800" width="4" height="4" fill="none" stroke="#ffffff" stroke-width="1.400"/><path d="M8.200 10.300L14 4.500M9.800 4.200H14.300V8.700" fill="none" stroke="#ffffff" stroke-width="1.500"/></svg>
<svg class="a" style="left:319px;top:233.5px;" width="18.5" height="18.5" viewBox="0 0 18.5 18.5"><path d="M1.600 4V14.500M16.900 4V14.500M4 1.600H14.500M4 16.900H14.500" stroke="#c4c4c4" stroke-width="1.300"/><rect x="0" y="0" width="3.600" height="3.600" fill="#c4c4c4"/><rect x="14.900" y="0" width="3.600" height="3.600" fill="#c4c4c4"/><rect x="0" y="14.900" width="3.600" height="3.600" fill="#c4c4c4"/><rect x="14.900" y="14.900" width="3.600" height="3.600" fill="#c4c4c4"/></svg>
<svg class="a" style="left:318px;top:259px;" width="20.5" height="20.5" viewBox="0 0 20.5 20.5"><circle cx="10.250" cy="10.250" r="8.300" fill="none" stroke="#c4c4c4" stroke-width="1.300" stroke-dasharray="9.700 3.340" stroke-dashoffset="4.850"/><path d="M10.250 4.500V16M4.500 10.250H16" stroke="#c4c4c4" stroke-width="1.300"/><path d="M8.300 6.400L10.250 4.400L12.200 6.400M8.300 14.100L10.250 16.100L12.200 14.100M6.400 8.300L4.400 10.250L6.400 12.200M14.100 8.300L16.100 10.250L14.100 12.200" fill="none" stroke="#c4c4c4" stroke-width="1.300"/><path d="M20.500 0V4L16.500 0Z M0 20.500V16.500L4 20.500Z" fill="#c4c4c4"/></svg>
<div class="a " style="left:1082.9px;top:107px;width:20.5px;height:1.2px;background:rgba(52,60,76,0.75);"></div>
<div class="a " style="left:1082.9px;top:111.3px;width:20.5px;height:1.2px;background:rgba(52,60,76,0.75);"></div>
<svg class="a" style="left:1100px;top:100px;" width="110" height="140" viewBox="0 0 110 140"><defs>
<linearGradient id="cg" x1="0" y1="0" x2="1" y2="0"><stop offset="0" stop-color="#97ec55"/><stop offset="0.55" stop-color="#8fe34a"/><stop offset="1" stop-color="#76c838"/></linearGradient>
<linearGradient id="cb" x1="0" y1="0" x2="0" y2="1"><stop offset="0" stop-color="#4d83fa"/><stop offset="0.55" stop-color="#497bf0"/><stop offset="1" stop-color="#3a63d0"/></linearGradient>
<linearGradient id="cr" x1="0" y1="0" x2="0" y2="1"><stop offset="0" stop-color="#e2e2e2"/><stop offset="0.6" stop-color="#cfcfcf"/><stop offset="1" stop-color="#adadad"/></linearGradient>
<linearGradient id="cd" x1="0" y1="0" x2="1" y2="0"><stop offset="0" stop-color="#dadada"/><stop offset="0.6" stop-color="#cdcdcd"/><stop offset="1" stop-color="#b2b2b2"/></linearGradient>
</defs>
<path d="M41.400 28.400Q49.250 25.800 57.100 28.400L49.600 53.200H48.900Z" fill="url(#cg)"/>
<path d="M14.200 56.200Q11.600 63.700 14.200 71.200L39 64V63.400Z" fill="url(#cb)"/>
<path d="M85.300 56.200Q88 63.700 85.300 71.200L60 64V63.400Z" fill="url(#cr)"/>
<path d="M41.400 99.400Q49.250 102.300 57.100 99.400L49.600 75H48.900Z" fill="url(#cd)"/>
<rect x="40.600" y="55" width="17.700" height="17.500" fill="#ffffff"/>
<text x="49.250" y="22.500" font-size="14" font-weight="700" text-anchor="middle" fill="#ffffff" font-family="Liberation Sans,sans-serif">y</text>
<text x="6.200" y="66.700" font-size="14" font-weight="700" text-anchor="middle" fill="#ffffff" font-family="Liberation Sans,sans-serif">z</text>
<g opacity="0.8"><path d="M88 23.800V21.400A2.400 2.400 0 0 1 92.800 21.400V22" fill="none" stroke="#ffffff" stroke-width="1.200"/><rect x="86.400" y="23.800" width="9.500" height="6" fill="#ffffff"/></g>
<g opacity="0.6"><path d="M30.400 122.200L17.500 128.500L30.400 134.800M17.500 128.500H30.400" fill="none" stroke="#ffffff" stroke-width="1.200"/></g><g opacity="0.330">
<text x="34.700" y="133.500" font-size="15.500" fill="#ffffff" textLength="40" lengthAdjust="spacing" font-family="Liberation Sans,sans-serif">Persp</text></g>
</svg>
<svg class="a" style="left:1233.7px;top:46.2px;" width="13" height="13" viewBox="0 0 13 13"><circle cx="6.500" cy="6.500" r="6.500" fill="#c4c4c4"/><rect x="5.500" y="5.400" width="2" height="4.800" fill="#3c3c3c"/><rect x="5.500" y="2.700" width="2" height="1.900" fill="#3c3c3c"/></svg>
<svg class="a" style="left:1556px;top:44px;" width="11.4" height="14.1" viewBox="0 0 11.4 14.1"><path d="M2.800 4.200A3 3 0 0 1 8.800 4.200V6.800" fill="none" stroke="#c4c4c4" stroke-width="1.600"/><rect x="0.800" y="7.400" width="9.800" height="5.900" rx="1.500" fill="none" stroke="#c4c4c4" stroke-width="1.600"/><rect x="2.700" y="9.900" width="5.800" height="1" fill="#c4c4c4"/></svg>
<svg class="a" style="left:1581.2px;top:43.1px;" width="4" height="16" viewBox="0 0 4 16"><circle cx="2" cy="3" r="1.75" fill="#c4c4c4"/><circle cx="2" cy="8" r="1.75" fill="#c4c4c4"/><circle cx="2" cy="13" r="1.75" fill="#c4c4c4"/></svg>
<svg class="a" style="left:1234.5px;top:73.75px;" preserveAspectRatio="none" width="31.5" height="36.5" viewBox="128 80 618 725"><path fill="#ffffff" stroke="#ffffff" stroke-width="4" d="M415 92.500L128 255L437 432L745 255L460 93V218L580 285L437 365L293 285L415 217Z"/><path fill="#f0f0f0" stroke="#f0f0f0" stroke-width="4" d="M128 255L437 432V805L146 638L240 575L383 650V462L237 378V520L128 582Z"/><path fill="#dddddd" stroke="#dddddd" stroke-width="4" d="M746 255L437 432V805L728 638L634 575L491 650V462L637 378V520L746 582Z"/></svg>
<svg class="a" style="left:1563.7px;top:74px;" width="13.3" height="13.3" viewBox="0 0 13.3 13.3"><circle cx="6.650" cy="6.650" r="6.650" fill="#c4c4c4"/><text x="6.650" y="10.400" font-size="10.500" font-weight="700" text-anchor="middle" fill="#3c3c3c" font-family="Liberation Sans,sans-serif">?</text></svg>
<svg class="a" style="left:1588.8px;top:72.6px;" width="4" height="16" viewBox="0 0 4 16"><circle cx="2" cy="3" r="1.75" fill="#c4c4c4"/><circle cx="2" cy="8" r="1.75" fill="#c4c4c4"/><circle cx="2" cy="13" r="1.75" fill="#c4c4c4"/></svg>
<svg class="a" style="left:1506.1499999999999px;top:864.6px;" width="9.3" height="5.8" viewBox="0 0 9.3 5.8"><path d="M0 0H9.3L4.65 5.8Z" fill="#c4c4c4"/></svg>
<svg class="a" style="left:1578.85px;top:864.6px;" width="9.3" height="5.8" viewBox="0 0 9.3 5.8"><path d="M0 0H9.3L4.65 5.8Z" fill="#c4c4c4"/></svg>
<div class="a " style="left:1571px;top:828.4px;width:25px;height:18.6px;background:#1f4a86;border-radius:9.300px;"></div>
<svg class="a" style="left:1577px;top:831.5px;" width="13" height="13" viewBox="0 0 13 13"><path d="M0.500 0.500H6L12.500 7L7 12.500L0.500 6Z" fill="#ffffff"/><circle cx="3.300" cy="3.300" r="1.300" fill="#1f4a86"/></svg>
<svg class="a" style="left:23px;top:593px;" width="15" height="13.7" viewBox="0 0 15 13.7"><path d="M7.500 0L9.500 4.800L14.900 5.200L10.800 8.600L12.100 13.700L7.500 10.900L2.900 13.700L4.200 8.600L0.100 5.200L5.500 4.800Z" fill="#d2d2d2"/></svg>
<svg class="a" style="left:6.4px;top:594.4999999999999px;" width="9.8" height="11.2" viewBox="0 0 9.8 11.2"><path d="M0 0L9.8 5.6L0 11.2Z" fill="#6f6f6f"/></svg>
<svg class="a" style="left:5.299999999999999px;top:635.6px;" width="11.2" height="9.8" viewBox="0 0 11.2 9.8"><path d="M0 0H11.2L5.6 9.8Z" fill="#6f6f6f"/></svg>
<svg class="a" style="left:22.7px;top:633.6px;" width="17.9" height="12.6" viewBox="0 0 17.9 12.6"><path d="M0.700 11.600V1.900Q0.700 0.800 1.800 0.800H5.500L7.100 2.800H13.300Q14.400 2.800 14.400 3.900V5.300" fill="none" stroke="#c4c4c4" stroke-width="1.400"/><path d="M3.900 5.200H17.900L14.900 12.600H0.900Z" fill="#c4c4c4"/></svg>
<svg class="a" style="left:23.199999999999996px;top:656.1px;" width="11.2" height="9.8" viewBox="0 0 11.2 9.8"><path d="M0 0H11.2L5.6 9.8Z" fill="#6f6f6f"/></svg>
<svg class="a" style="left:40.599999999999994px;top:654.1px;" width="17.9" height="12.6" viewBox="0 0 17.9 12.6"><path d="M0.700 11.600V1.900Q0.700 0.800 1.800 0.800H5.500L7.100 2.800H13.300Q14.400 2.800 14.400 3.900V5.300" fill="none" stroke="#c4c4c4" stroke-width="1.400"/><path d="M3.900 5.200H17.900L14.900 12.600H0.900Z" fill="#c4c4c4"/></svg>
<svg class="a" style="left:58.6px;top:674.6px;" width="15.7" height="13.2" viewBox="0 0 15.7 13.2"><path d="M0 1.400Q0 0.200 1.200 0.200H6L7.600 3.300H14.500Q15.700 3.300 15.700 4.500V12Q15.700 13.200 14.500 13.200H1.200Q0 13.200 0 12Z" fill="#c4c4c4"/></svg>
<svg class="a" style="left:42.199999999999996px;top:695.9px;" width="9.8" height="11.2" viewBox="0 0 9.8 11.2"><path d="M0 0L9.8 5.6L0 11.2Z" fill="#6f6f6f"/></svg>
<svg class="a" style="left:58.6px;top:695.1px;" width="15.7" height="13.2" viewBox="0 0 15.7 13.2"><path d="M0 1.400Q0 0.200 1.200 0.200H6L7.600 3.300H14.500Q15.700 3.300 15.700 4.500V12Q15.700 13.200 14.500 13.200H1.200Q0 13.200 0 12Z" fill="#c4c4c4"/></svg>
<svg class="a" style="left:58.6px;top:715.6px;" width="15.7" height="13.2" viewBox="0 0 15.7 13.2"><path d="M0 1.400Q0 0.200 1.200 0.200H6L7.600 3.300H14.500Q15.700 3.300 15.700 4.500V12Q15.700 13.200 14.500 13.200H1.200Q0 13.200 0 12Z" fill="#c4c4c4"/></svg>
<svg class="a" style="left:58.6px;top:736.1px;" width="15.7" height="13.2" viewBox="0 0 15.7 13.2"><path d="M0 1.400Q0 0.200 1.200 0.200H6L7.600 3.300H14.500Q15.700 3.300 15.700 4.500V12Q15.700 13.200 14.500 13.200H1.200Q0 13.200 0 12Z" fill="#c4c4c4"/></svg>
<svg class="a" style="left:41.099999999999994px;top:758.6px;" width="11.2" height="9.8" viewBox="0 0 11.2 9.8"><path d="M0 0H11.2L5.6 9.8Z" fill="#6f6f6f"/></svg>
<svg class="a" style="left:58.5px;top:756.6px;" width="17.9" height="12.6" viewBox="0 0 17.9 12.6"><path d="M0.700 11.600V1.900Q0.700 0.800 1.800 0.800H5.500L7.100 2.800H13.300Q14.400 2.800 14.400 3.900V5.300" fill="none" stroke="#c4c4c4" stroke-width="1.400"/><path d="M3.900 5.200H17.900L14.900 12.600H0.900Z" fill="#c4c4c4"/></svg>
<svg class="a" style="left:60.1px;top:777.9px;" width="9.8" height="11.2" viewBox="0 0 9.8 11.2"><path d="M0 0L9.8 5.6L0 11.2Z" fill="#6f6f6f"/></svg>
<svg class="a" style="left:76.49999999999999px;top:777.1px;" width="15.7" height="13.2" viewBox="0 0 15.7 13.2"><path d="M0 1.400Q0 0.200 1.200 0.200H6L7.600 3.300H14.500Q15.700 3.300 15.700 4.500V12Q15.700 13.200 14.500 13.200H1.200Q0 13.200 0 12Z" fill="#c4c4c4"/></svg>
<svg class="a" style="left:60.1px;top:798.4px;" width="9.8" height="11.2" viewBox="0 0 9.8 11.2"><path d="M0 0L9.8 5.6L0 11.2Z" fill="#6f6f6f"/></svg>
<svg class="a" style="left:76.49999999999999px;top:797.6px;" width="15.7" height="13.2" viewBox="0 0 15.7 13.2"><path d="M0 1.400Q0 0.200 1.200 0.200H6L7.600 3.300H14.500Q15.700 3.300 15.700 4.500V12Q15.700 13.200 14.500 13.200H1.200Q0 13.200 0 12Z" fill="#c4c4c4"/></svg>
<svg class="a" style="left:58.99999999999999px;top:820.1px;" width="11.2" height="9.8" viewBox="0 0 11.2 9.8"><path d="M0 0H11.2L5.6 9.8Z" fill="#6f6f6f"/></svg>
<svg class="a" style="left:76.39999999999999px;top:818.1px;" width="17.9" height="12.6" viewBox="0 0 17.9 12.6"><path d="M0.700 11.600V1.900Q0.700 0.800 1.800 0.800H5.500L7.100 2.800H13.300Q14.400 2.800 14.400 3.900V5.300" fill="none" stroke="#c4c4c4" stroke-width="1.400"/><path d="M3.900 5.200H17.900L14.900 12.600H0.900Z" fill="#c4c4c4"/></svg>
<svg class="a" style="left:94.39999999999999px;top:838.6px;" width="15.7" height="13.2" viewBox="0 0 15.7 13.2"><path d="M0 1.400Q0 0.200 1.200 0.200H6L7.600 3.300H14.500Q15.700 3.300 15.700 4.500V12Q15.700 13.200 14.500 13.200H1.200Q0 13.200 0 12Z" fill="#c4c4c4"/></svg>
<svg class="a" style="left:77.99999999999999px;top:859.9px;" width="9.8" height="11.2" viewBox="0 0 9.8 11.2"><path d="M0 0L9.8 5.6L0 11.2Z" fill="#6f6f6f"/></svg>
<svg class="a" style="left:94.39999999999999px;top:859.1px;" width="15.7" height="13.2" viewBox="0 0 15.7 13.2"><path d="M0 1.400Q0 0.200 1.200 0.200H6L7.600 3.300H14.500Q15.700 3.300 15.700 4.500V12Q15.700 13.200 14.500 13.200H1.200Q0 13.200 0 12Z" fill="#c4c4c4"/></svg>
<svg class="a" style="left:94.39999999999999px;top:879.6px;" width="15.7" height="13.2" viewBox="0 0 15.7 13.2"><path d="M0 1.400Q0 0.200 1.200 0.200H6L7.600 3.300H14.500Q15.700 3.300 15.700 4.500V12Q15.700 13.200 14.500 13.200H1.200Q0 13.200 0 12Z" fill="#c4c4c4"/></svg>
<svg class="a" style="left:8.7px;top:544.8px;" width="15.7" height="13.2" viewBox="0 0 15.7 13.2"><path d="M0 1.200Q0 0 1.200 0H6.300L7.900 3.700H14.500Q15.700 3.700 15.700 4.900V12Q15.700 13.200 14.500 13.200H1.200Q0 13.200 0 12Z" fill="#c4c4c4"/></svg>
<svg class="a" style="left:115px;top:544.5px;" width="13" height="13" viewBox="0 0 13 13"><rect x="0" y="0" width="13" height="13" rx="1.500" fill="#c4c4c4"/><path d="M2.200 3.400H10.800M2.200 6H10.800M2.200 8.600H10.800M2.200 11H7" stroke="#282828" stroke-width="1.200"/></svg>
<svg class="a" style="left:1175.7px;top:543.5px;" width="11.4" height="14.1" viewBox="0 0 11.4 14.1"><path d="M2.800 4.200A3 3 0 0 1 8.800 4.200V6.800" fill="none" stroke="#c4c4c4" stroke-width="1.600"/><rect x="0.800" y="7.400" width="9.800" height="5.900" rx="1.500" fill="none" stroke="#c4c4c4" stroke-width="1.600"/><rect x="2.700" y="9.900" width="5.800" height="1" fill="#c4c4c4"/></svg>
<svg class="a" style="left:1201px;top:542.8px;" width="4" height="16" viewBox="0 0 4 16"><circle cx="2" cy="3" r="1.75" fill="#c4c4c4"/><circle cx="2" cy="8" r="1.75" fill="#c4c4c4"/><circle cx="2" cy="13" r="1.75" fill="#c4c4c4"/></svg>
<svg class="a" style="left:8.7px;top:568.1999999999999px;" width="15.4" height="15.4" viewBox="0 0 15.4 15.4"><path d="M7.7 0V15.4M0 7.7H15.4" stroke="#d2d2d2" stroke-width="2.2"/></svg>
<svg class="a" style="left:30.0px;top:573.1px;" width="9.2" height="5.8" viewBox="0 0 9.2 5.8"><path d="M0 0H9.2L4.6 5.8Z" fill="#c4c4c4"/></svg>
<svg class="a" style="left:320.7px;top:597.5px;" width="9.3" height="5.6" viewBox="0 0 9.3 5.6"><path d="M0 5.600H9.300L4.650 0Z" fill="#c4c4c4"/></svg>
<svg class="a" style="left:320.3px;top:871.5px;" width="10" height="5.6" viewBox="0 0 10 5.6"><path d="M0 0H10L5.0 5.6Z" fill="#c4c4c4"/></svg>
<svg class="a" style="left:395px;top:598px;" width="7.5" height="11" viewBox="0 0 7.5 11"><path d="M1 0.800L6.500 5.500L1 10.200" fill="none" stroke="#b0b0b0" stroke-width="1.400"/></svg>
<svg class="a" style="left:514.5px;top:598px;" width="7.5" height="11" viewBox="0 0 7.5 11"><path d="M1 0.800L6.500 5.500L1 10.200" fill="none" stroke="#b0b0b0" stroke-width="1.400"/></svg>
<svg class="a" style="left:640px;top:571px;" width="9.5" height="9.5" viewBox="0 0 9.5 9.5"><circle cx="3.600" cy="3.600" r="2.700" fill="none" stroke="#c4c4c4" stroke-width="1.500"/><path d="M5.600 5.600L8.700 8.700" stroke="#c4c4c4" stroke-width="1.800" stroke-linecap="round"/></svg>
<div class="a " style="left:1016.8px;top:566px;width:23px;height:19.25px;background:#2f2f2f;border-radius:0 4px 4px 0;box-shadow:inset 0 0 0 1px #232323;"></div>
<svg class="a" style="left:1020.9px;top:567.5px;" width="16" height="16" viewBox="0 0 16 16"><path d="M4.600 9V2.200a1.500 1.500 0 0 1 1.500-1.500h7.600a1.500 1.500 0 0 1 1.500 1.500v8.400a1.500 1.500 0 0 1-1.500 1.500H7" fill="none" stroke="#c4c4c4" stroke-width="1.400"/><path d="M7 9.400L12.200 4.200M8.400 3.900H12.500V8" fill="none" stroke="#c4c4c4" stroke-width="1.400"/><rect x="0.700" y="9.600" width="5.300" height="5.300" fill="none" stroke="#c4c4c4" stroke-width="1.400"/></svg>
<svg class="a" style="left:1052.5px;top:566.75px;" width="16" height="17" viewBox="0 0 16 17"><rect x="1.400" y="0" width="7.600" height="8" fill="#c4c4c4"/><path d="M12.400 3.600L16 12.400H8.800Z" fill="#c4c4c4"/><circle cx="4.800" cy="12.100" r="4.800" fill="#c4c4c4" stroke="#3c3c3c" stroke-width="0.900"/></svg>
<svg class="a" style="left:1085.8px;top:569.3px;" width="14" height="13" viewBox="0 0 14 13"><path d="M8.200 0.300H13.700V5.800L6 12.800L0.300 7.300Z" fill="#c4c4c4"/><circle cx="11" cy="3" r="1.200" fill="#3c3c3c"/></svg>
<svg class="a" style="left:1117.75px;top:566.75px;" width="17.3" height="17.3" viewBox="0 0 17.3 17.3"><path d="M5.100 0H12.200L17.300 5.100V12.200L12.200 17.300H5.100L0 12.200V5.100Z" fill="#d6d6d6"/><rect x="7.650" y="3.300" width="2" height="7" fill="#3c3c3c"/><rect x="7.650" y="11.600" width="2" height="2.100" fill="#3c3c3c"/></svg>
<svg class="a" style="left:1152.25px;top:567.5px;" width="15.8" height="15" viewBox="0 0 15.8 15"><path d="M7.900 0L10 5.300L15.700 5.700L11.300 9.400L12.700 15L7.900 11.900L3.100 15L4.500 9.400L0.100 5.700L5.800 5.300Z" fill="#808080"/></svg>
<svg class="a" style="left:1184.5px;top:568.3px;" width="18" height="14.4" viewBox="0 0 18.400 14.700"><path d="M0.700 7.700C4 2.500 14.400 2.500 17.700 7.700C14.400 12.900 4 12.900 0.700 7.700Z" fill="none" stroke="#c4c4c4" stroke-width="1.5"/><path d="M9.200 4.700A3 3 0 1 1 9.100 10.700" fill="none" stroke="#c4c4c4" stroke-width="1.5"/><path d="M2.500 14.200L15.500 0.500" stroke="#c4c4c4" stroke-width="1.7"/></svg>
<svg class="a" style="left:362.5px;top:633.75px;" preserveAspectRatio="none" width="63" height="73.4" viewBox="128 80 618 725"><path fill="#dbe5fb" stroke="#dbe5fb" stroke-width="4" d="M415 92.500L128 255L437 432L745 255L460 93V218L580 285L437 365L293 285L415 217Z"/><path fill="#c6d1e9" stroke="#c6d1e9" stroke-width="4" d="M128 255L437 432V805L146 638L240 575L383 650V462L237 378V520L128 582Z"/><path fill="#aebad3" stroke="#aebad3" stroke-width="4" d="M746 255L437 432V805L728 638L634 575L491 650V462L637 378V520L746 582Z"/></svg>
<svg class="a" style="left:460.5px;top:633.75px;" preserveAspectRatio="none" width="62.5" height="73.4" viewBox="128 80 618 725"><path fill="#fbfbfb" stroke="#fbfbfb" stroke-width="4" d="M415 92.500L128 255L437 432L745 255L460 93V218L580 285L437 365L293 285L415 217Z"/><path fill="#e9e9e9" stroke="#e9e9e9" stroke-width="4" d="M128 255L437 432V805L146 638L240 575L383 650V462L237 378V520L128 582Z"/><path fill="#d7d7d7" stroke="#d7d7d7" stroke-width="4" d="M746 255L437 432V805L728 638L634 575L491 650V462L637 378V520L746 582Z"/></svg>
<svg class="a" style="left:340px;top:862px;" preserveAspectRatio="none" width="16.2" height="17.5" viewBox="128 80 618 725"><path fill="#ffffff" stroke="#ffffff" stroke-width="4" d="M415 92.500L128 255L437 432L745 255L460 93V218L580 285L437 365L293 285L415 217Z"/><path fill="#f0f0f0" stroke="#f0f0f0" stroke-width="4" d="M128 255L437 432V805L146 638L240 575L383 650V462L237 378V520L128 582Z"/><path fill="#e2e2e2" stroke="#e2e2e2" stroke-width="4" d="M746 255L437 432V805L728 638L634 575L491 650V462L637 378V520L746 582Z"/></svg>
<div class="a " style="left:1128.75px;top:870.4px;width:70.6px;height:1.4px;background:#5e5e5e;"></div>
<div class="a " style="left:1163.7px;top:865px;width:12px;height:12px;background:#999999;border-radius:6px;"></div>
</body></html>
